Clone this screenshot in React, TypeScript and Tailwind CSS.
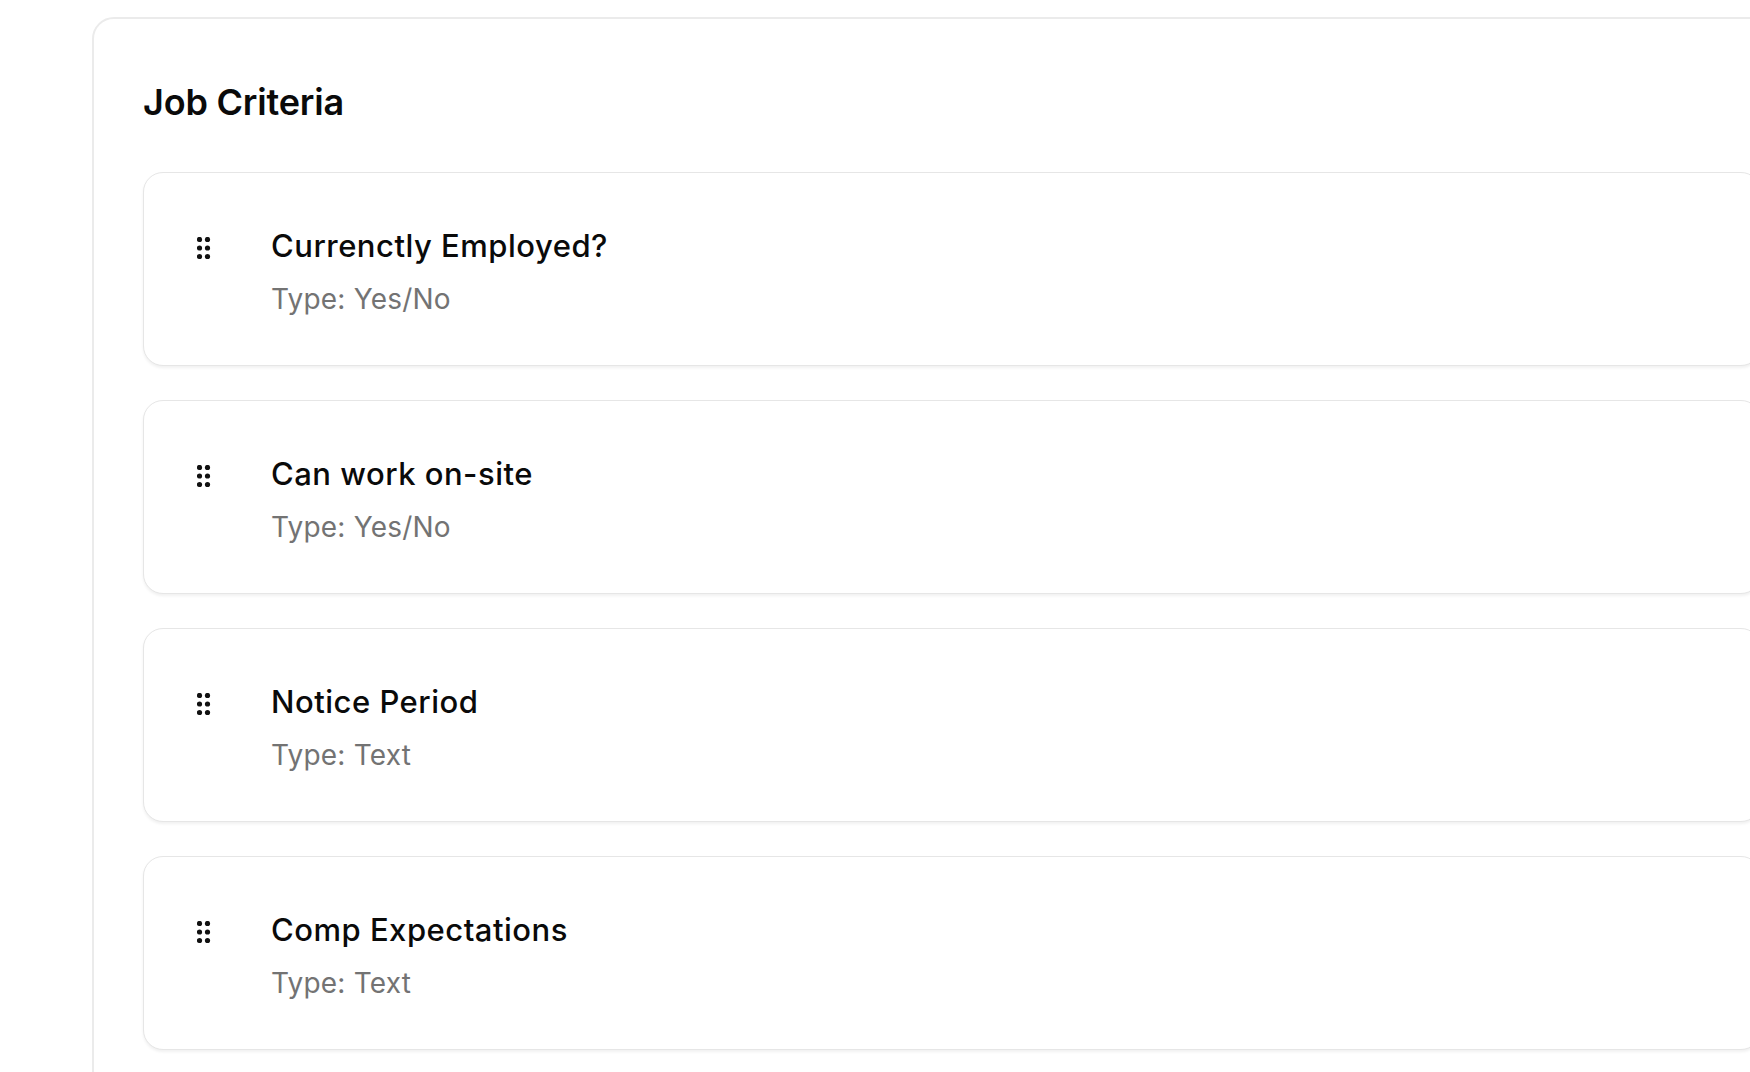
import React from 'react';

type Criterion = {
  label: string;
  type: string;
};

const criteria: Criterion[] = [
  { label: 'Currenctly Employed?', type: 'Yes/No' },
  { label: 'Can work on-site', type: 'Yes/No' },
  { label: 'Notice Period', type: 'Text' },
  { label: 'Comp Expectations', type: 'Text' },
];

function DragHandle() {
  return (
    <svg width="14" height="23" viewBox="0 0 14 23" className="shrink-0 mt-[9px]" aria-hidden>
      {[2.5, 10.5].map((cx) =>
        [2.5, 11, 19.5].map((cy) => (
          <circle key={`${cx}-${cy}`} cx={cx} cy={cy} r="2.6" fill="#111111" />
        ))
      )}
    </svg>
  );
}

function CriterionCard({ item }: { item: Criterion }) {
  return (
    <div className="flex items-start bg-white border border-[#e6e6e6] rounded-[20px] shadow-[0_2px_3px_rgba(0,0,0,0.06)] pl-[53px] pt-[55px] pb-[50px]">
      <DragHandle />
      <div className="flex flex-col ml-[60px]">
        <div className="text-[31px] leading-[36px] font-medium tracking-[0.5px] text-[#0a0a0a]">{item.label}</div>
        <div className="mt-[19px] text-[28px] leading-[32px] tracking-[0.2px] text-[#737373]">Type: {item.type}</div>
      </div>
    </div>
  );
}

export default function App() {
  return (
    <div
      className="h-screen w-full bg-white overflow-hidden"
      style={{ fontFamily: 'Inter, "Noto Sans", sans-serif' }}
    >
      <div className="ml-[92px] mt-[17px] w-[1720px] bg-white border-2 border-[#ebebeb] rounded-[22px] pl-[49px] pr-[49px] pt-[61px] pb-[40px]">
        <h2 className="text-[36px] leading-[44px] font-semibold text-[#0a0a0a] tracking-[-0.2px]">Job Criteria</h2>
        <div className="flex flex-col gap-[34px] mt-[48px]">
          {criteria.map((c) => (
            <CriterionCard key={c.label} item={c} />
          ))}
        </div>
      </div>
    </div>
  );
}
